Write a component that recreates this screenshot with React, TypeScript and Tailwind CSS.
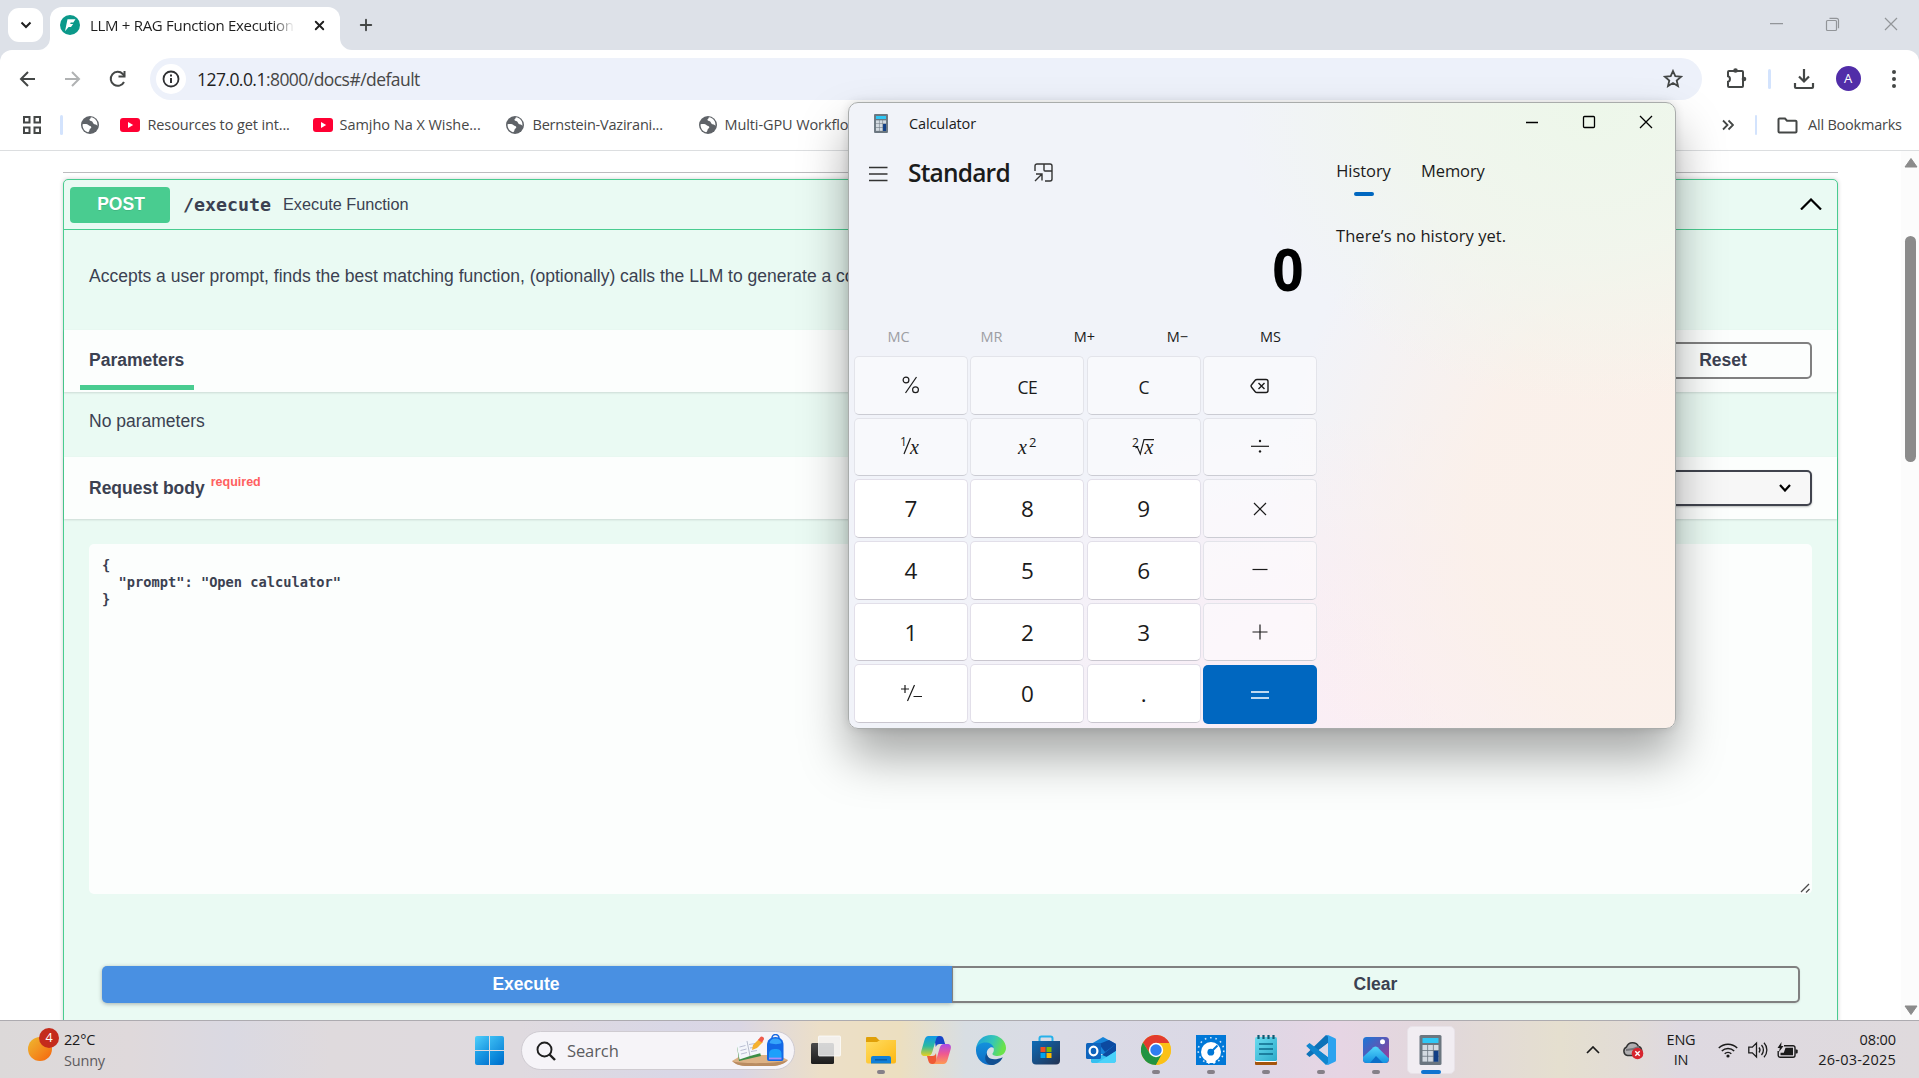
import React from "react";
import { X, Plus } from "lucide-react";

const UI = "font-['Open_Sans','Noto_Sans',sans-serif]";
const ARIAL = "font-['Liberation_Sans',Arial,sans-serif]";

function Globe() {
  return (
    <svg width="20" height="20" viewBox="0 0 20 20" className="shrink-0">
      <circle cx="10" cy="10" r="9" fill="#5f6368" />
      <path d="M2.6 9.2C5 8.6 7.6 8.9 8.7 10.3c.8 1 2.6.6 2.6 2 0 1.300-1.600 1.300-1.800 2.600-.1 1-.8 2.200-1.500 2.300C4.800 16.500 2.200 13 2.600 9.200z" fill="#fff" />
      <path d="M10.800 2.300c.4 1.300-1.600 1.500-1.400 2.600.2 1.200 2.700.6 3.200 2.200.4 1.500 1.500 2.500 2.700 2.500 1 0 1.500.6 2.100 1.300C18 6.500 15.300 2.900 10.800 2.300z" fill="#fff" />
    </svg>
  );
}

function YouTube() {
  return (
    <svg width="20" height="14" viewBox="0 0 20 14" className="shrink-0">
      <rect width="20" height="14" rx="3" fill="#ff0033" />
      <path d="M8 4l5.200 3L8 10z" fill="#fff" />
    </svg>
  );
}

function CalcIcon({ w, h }: { w: number; h: number }) {
  return (
    <svg width={w} height={h} viewBox="0 0 22 30" className="shrink-0">
      <rect width="22" height="30" rx="1.500" fill="#6b7680" />
      <rect x="3" y="3" width="16" height="5" rx=".5" fill="#2fc7f5" />
      {[0, 1, 2].map((r) =>
        [0, 1, 2].map((c) => (
          <rect key={`${r}${c}`} x={3 + c * 5.600} y={10 + r * 5.800} width="4.800" height="5" fill="#d3dae1" />
        ))
      )}
      <rect x="14.200" y="15.800" width="4.800" height="11" fill="#123f86" />
    </svg>
  );
}

function TabStrip() {
  return (
    <div className="flex h-[50px] w-full bg-[#dde1e8]">
      <div className="mt-2 ml-2 flex h-[34px] w-[35px] shrink-0 items-center justify-center rounded-[11px] bg-white">
        <svg width="12" height="8" viewBox="0 0 12 8"><path d="M1.500 1.500L6 6l4.500-4.500" fill="none" stroke="#1f1f1f" strokeWidth="2" /></svg>
      </div>
      <svg width="12" height="12" viewBox="0 0 12 12" className="mt-[38px] -ml-[5px] shrink-0"><path d="M0 12A12 12 0 0 0 12 0V12z" fill="#fff" /></svg>
      <div className="mt-[7px] flex h-[43px] w-[290px] shrink-0 items-center rounded-t-[12px] bg-white pb-[7px] pl-[10px]">
        <svg width="20" height="20" viewBox="0 0 20 20" className="shrink-0">
          <circle cx="10" cy="10" r="10" fill="#0b998a" />
          <path d="M7.500 4.200h8l-2.200 3.200h-2.600L10.200 9h3l-2.200 3h-2.400L5 16.200z" fill="#fff" />
        </svg>
        <div className="ml-[10px] w-[207px] overflow-hidden whitespace-nowrap text-[15px] tracking-[-0.3px] text-[#1f1f1f] [mask-image:linear-gradient(to_right,black_88%,transparent_99%)]">
          LLM + RAG Function Execution API
        </div>
        <X size={15} strokeWidth={3} color="#1f1f1f" className="ml-[15px] shrink-0" />
      </div>
      <svg width="12" height="12" viewBox="0 0 12 12" className="mt-[38px] shrink-0"><path d="M12 12A12 12 0 0 1 0 0V12z" fill="#fff" /></svg>
      <Plus size={18} strokeWidth={2.500} color="#444746" className="mt-4 ml-[5px] shrink-0" />
      <svg width="128" height="16" viewBox="0 0 128 16" className="mt-4 mr-[21px] ml-auto" fill="none" stroke="#929599" strokeWidth="1.200">
        <path d="M0 7.700h13M115 2l12 12M127 2l-12 12" />
        <rect x="56.500" y="4.500" width="10" height="10" rx="1" />
        <path d="M59.500 2.300h7a2 2 0 0 1 2 2v8" />
      </svg>
    </div>
  );
}

function Toolbar() {
  return (
    <div className="bg-[#dde1e8]">
      <div className="flex h-[50px] items-center rounded-t-[12px] bg-white pt-[7px]">
        <svg width="110" height="20" viewBox="0 0 110 20" className="ml-[19px] shrink-0" fill="none" strokeWidth="2">
          <path d="M16 10H2.500M9 3L2 10l7 7" stroke="#444746" />
          <path d="M46 10h13.500M53 3l7 7-7 7" stroke="#b0b2b3" />
          <path d="M105 13A7 7 0 1 1 103.800 5l1.800 2" stroke="#444746" />
          <path d="M105.500 2v5.500h-6" stroke="#444746" />
        </svg>
        <div className="ml-[21px] flex h-[42px] w-[1552px] shrink-0 items-center rounded-full bg-[#edf1fa] pr-[19px] pl-[6px]">
          <div className="flex h-[30px] w-[30px] items-center justify-center rounded-full bg-white">
            <svg width="18" height="18" viewBox="0 0 18 18"><circle cx="9" cy="9" r="7.500" fill="none" stroke="#303133" strokeWidth="1.800" /><path d="M9 8v5M9 4.600v2" stroke="#303133" strokeWidth="2" /></svg>
          </div>
          <div className="mt-[2px] ml-[11px] text-[17.500px] tracking-[-0.55px] text-[#474747]"><span className="text-[#1f1f1f]">127.0.0.1</span>:8000/docs#/default</div>
          <svg width="20" height="20" viewBox="0 0 20 20" className="ml-auto"><path d="M10 2l2.300 5.200 5.700.5-4.300 3.800 1.300 5.600-5-3-5 3 1.300-5.600L2 7.700l5.700-.5z" fill="none" stroke="#444746" strokeWidth="1.800" /></svg>
        </div>
        <svg width="21" height="21" viewBox="0 0 21 21" className="ml-[24px] shrink-0">
          <path d="M2 4a1 1 0 0 1 1-1h13a1 1 0 0 1 1 1v14a1 1 0 0 1-1 1H3a1 1 0 0 1-1-1v-4.200c2.600-.6 2.600-5 0-5.600z" fill="none" stroke="#444746" strokeWidth="2" />
          <circle cx="9.500" cy="2.500" r="2.300" fill="#444746" /><circle cx="18" cy="11" r="2.300" fill="#444746" />
        </svg>
        <div className="ml-[21px] h-5 w-[2.500px] shrink-0 rounded bg-[#d3e3fd]" />
        <svg width="22" height="22" viewBox="0 0 22 22" className="ml-[22px] shrink-0" fill="none" stroke="#444746" strokeWidth="2.200"><path d="M11 1v12M6 8.500l5 5 5-5M2 15v4a1 1 0 0 0 1 1h16a1 1 0 0 0 1-1v-4" /></svg>
        <div className="ml-[21px] flex h-[25px] w-[25px] shrink-0 items-center justify-center rounded-full bg-[#512da8] text-[13px] text-white">A</div>
        <svg width="6" height="20" viewBox="0 0 6 20" className="ml-[30px] shrink-0" fill="#444746"><circle cx="3" cy="3" r="2" /><circle cx="3" cy="10" r="2" /><circle cx="3" cy="17" r="2" /></svg>
      </div>
    </div>
  );
}

function Bookmarks() {
  return (
    <div className="flex h-[51px] items-center border-b border-[#dcdee0] bg-white text-[14.500px] whitespace-nowrap text-[#474747]">
      <svg width="18" height="18" viewBox="0 0 18 18" className="ml-[23px] shrink-0" fill="none" stroke="#444746" strokeWidth="2"><path d="M1 1h5.500v5.500H1zM11.500 1H17v5.500h-5.500zM1 11.500h5.500V17H1zM11.500 11.500H17V17h-5.500z" /></svg>
      <div className="ml-[19px] h-5 w-[2.500px] shrink-0 rounded bg-[#d3e3fd]" />
      <div className="ml-[17px] flex w-[40px] shrink-0"><Globe /></div>
      <div className="flex w-[193px] shrink-0 items-center"><YouTube /><span className="ml-[8px] tracking-[-0.12px]">Resources to get int...</span></div>
      <div className="flex w-[192px] shrink-0 items-center"><YouTube /><span className="ml-[7px] tracking-[-0.03px]">Samjho Na X Wishe...</span></div>
      <div className="flex w-[193px] shrink-0 items-center"><Globe /><span className="ml-[8px] tracking-[-0.22px]">Bernstein-Vazirani...</span></div>
      <div className="flex w-[190px] shrink-0 items-center"><Globe /><span className="ml-[7px] tracking-[-0.1px]">Multi-GPU Workflows</span></div>
      <svg width="12" height="12" viewBox="0 0 12 12" className="ml-auto shrink-0" fill="none" stroke="#444746" strokeWidth="1.800"><path d="M1 1.500L5.500 6 1 10.500M6.500 1.500L11 6l-4.500 4.500" /></svg>
      <div className="ml-[21px] h-5 w-[2.500px] shrink-0 rounded bg-[#d3e3fd]" />
      <svg width="21" height="17" viewBox="0 0 21 17" className="ml-[20px] shrink-0" fill="none" stroke="#444746" strokeWidth="2"><path d="M1.500 2.500a1 1 0 0 1 1-1H8l2 2.200h8.500a1 1 0 0 1 1 1v9.800a1 1 0 0 1-1 1h-16a1 1 0 0 1-1-1z" /></svg>
      <span className="mr-[16px] ml-[10px] w-[95px] tracking-[-0.22px]">All Bookmarks</span>
    </div>
  );
}

function SectionHeader({ children }: { children: React.ReactNode }) {
  return <div className="flex h-[62px] items-center justify-between bg-[#fcfefd] pr-[25px] pb-[2px] pl-[25px] shadow-[0_1px_2px_rgba(0,0,0,0.13)]">{children}</div>;
}

function DocsPage() {
  return (
    <div className={`${ARIAL} flex h-[869px] overflow-hidden bg-white text-[17.500px] text-[#3b4151]`}>
      <div className="ml-[63px] w-[1775px] shrink-0">
        <div className="mt-[21px] h-px bg-[#bcbcbf]" />
        <div className="mt-[6px] h-[900px] rounded-[5px] border border-[#49cc90] bg-[#eafaf3] shadow-[0_0_4px_rgba(0,0,0,0.19)]">
          <div className="flex h-[50px] items-center border-b border-[#49cc90] pr-[15px] pl-[6px]">
            <div className="flex h-[36px] w-[100px] items-center justify-center rounded-[4px] bg-[#49cc90] pl-[2px] text-[17.500px] font-bold text-white [text-shadow:0_1px_0_rgba(0,0,0,0.1)]">POST</div>
            <div className="ml-[13px] w-[100px] font-['DejaVu_Sans_Mono',monospace] text-[18.300px] font-bold">/execute</div>
            <div className="text-[16.250px]">Execute Function</div>
            <svg width="22" height="12" viewBox="0 0 22 12" className="-mt-[2px] ml-auto"><path d="M1 11.500L11 1.500l10 10" fill="none" stroke="#000" strokeWidth="2.200" /></svg>
          </div>
          <div className="flex h-[100px] items-center px-[25px] pb-[8px] whitespace-nowrap">Accepts a user prompt, finds the best matching function, (optionally) calls the LLM to generate a code snippet</div>
          <SectionHeader>
            <div className="-ml-[9px] flex h-[59px] w-[114px] flex-col justify-between pt-[18px]">
              <span className="ml-[9px] leading-[22px] font-bold">Parameters</span>
              <div className="h-[5px] bg-[#49cc90]" />
            </div>
            <div className="flex h-[37px] w-[178px] items-center justify-center rounded-[5px] border-2 border-[#808080] font-bold">Reset</div>
          </SectionHeader>
          <div className="flex h-[65px] items-center px-[25px] pb-[6px]">No parameters</div>
          <SectionHeader>
            <div className="flex pt-[2px] font-bold">Request body<span className="-mt-[2px] ml-[6px] text-[12.500px] font-bold text-[#ff6060]">required</span></div>
            <div className="mt-[1px] flex h-[36px] w-[240px] items-center justify-end rounded-[5px] border-2 border-[#41444e] bg-[#f7f7f7] pr-[19px] shadow-[0_1px_2px_rgba(0,0,0,0.25)]">
              <svg width="12" height="8" viewBox="0 0 12 8"><path d="M1 1l5 5.500L11 1" fill="none" stroke="#000" strokeWidth="2.200" /></svg>
            </div>
          </SectionHeader>
          <div className="mx-[25px] mt-[25px] flex h-[350px] items-end justify-between rounded-[5px] bg-[#fcfefd]">
            <pre className="self-start pt-[13px] pl-[13px] font-['DejaVu_Sans_Mono',monospace] text-[13.700px] leading-[17px] font-bold">{`{
  "prompt": "Open calculator"
}`}</pre>
            <svg width="12" height="12" viewBox="0 0 12 12"><path d="M1 10l8-8M6 10.500L9.500 7" stroke="#4b4b4b" strokeWidth="1.300" /></svg>
          </div>
          <div className="mr-[37px] ml-[38px] mt-[72px] flex h-[37px] font-bold">
            <div className="flex w-[850px] items-center justify-center rounded-l-[5px] bg-[#4990e2] pr-[2px] pb-[1px] text-white shadow-[0_1px_4px_rgba(0,0,0,0.3)]">Execute</div>
            <div className="flex flex-1 items-center justify-center rounded-r-[5px] border-2 border-l-[1px] border-[#808080] pb-[1px] shadow-[0_1px_2px_rgba(0,0,0,0.1)]">Clear</div>
          </div>
        </div>
      </div>
      <div className="ml-auto flex w-[18px] flex-col items-center bg-[#fcfcfc] pt-[7px] pl-[1px]">
        <svg width="14" height="10" viewBox="0 0 14 10"><path d="M7 0.500L13 9H1z" fill="#8b8b8b" stroke="#8b8b8b" strokeLinejoin="round" /></svg>
        <div className="mt-[68px] h-[226px] w-[11px] rounded-full bg-[#8b8b8b]" />
        <svg width="14" height="10" viewBox="0 0 14 10" className="mt-auto mb-[5px]"><path d="M7 9.500L13 1H1z" fill="#8b8b8b" stroke="#8b8b8b" strokeLinejoin="round" /></svg>
      </div>
    </div>
  );
}

const SERIF = "font-['Liberation_Serif',serif] italic";

function Glyph({ name }: { name: string }) {
  const p = { fill: "none", stroke: "#1b1b1b", strokeWidth: 1.200 };
  switch (name) {
    case "%":
      return <svg width="20" height="20" viewBox="0 0 20 20" {...p}><circle cx="5" cy="5" r="2.900" /><circle cx="14.500" cy="14.700" r="2.900" /><path d="M15.500 2L4.500 18" /></svg>;
    case "back":
      return <svg width="20" height="16" viewBox="0 0 20 16" {...p} strokeWidth="1.400" className="mt-[1px]"><path d="M7 1.500h9a2 2 0 0 1 2 2v9a2 2 0 0 1-2 2H7c-.8 0-1.300-.2-1.800-.8L1.600 9.200a1.800 1.800 0 0 1 0-2.400l3.600-4.500c.5-.6 1-.8 1.800-.8zM8.500 5l6 6M14.500 5l-6 6" /></svg>;
    case "inv":
      return <svg width="26" height="26" viewBox="-2 -2 26 26" className="-mt-[2px] overflow-visible"><text x="0" y="11" fontSize="12" className={UI} fill="#1b1b1b">1</text><path d="M10.500 3L4 19" {...p} /><text x="10" y="18.500" fontSize="20" className={SERIF} fill="#1b1b1b">x</text></svg>;
    case "sq":
      return <svg width="22" height="22" viewBox="0 0 22 22" className="-mt-[2px] overflow-visible"><text x="2" y="18.500" fontSize="20" className={SERIF} fill="#1b1b1b">x</text><text x="13" y="11.500" fontSize="13" className={UI} fill="#1b1b1b">2</text></svg>;
    case "root":
      return <svg width="24" height="22" viewBox="0 0 24 22" className="-mt-[2px] overflow-visible"><text x="0" y="11.500" fontSize="12" className={UI} fill="#1b1b1b">2</text><path d="M3.500 13l1.800-1 3 7L12 4.700h10" {...p} /><text x="12.500" y="18.500" fontSize="20" className={SERIF} fill="#1b1b1b">x</text></svg>;
    case "div":
      return <svg width="20" height="20" viewBox="0 0 20 20" {...p} className="-mt-[2px]"><path d="M1 10.300h18" /><circle cx="10" cy="5" r="1.200" fill="#1b1b1b" stroke="none" /><circle cx="10" cy="15.400" r="1.200" fill="#1b1b1b" stroke="none" /></svg>;
    case "mul":
      return <svg width="14" height="14" viewBox="0 0 14 14" {...p}><path d="M1 1l12 12M13 1L1 13" /></svg>;
    case "sub":
      return <svg width="16" height="16" viewBox="0 0 16 16" {...p}><path d="M.5 7.500h15" /></svg>;
    case "add":
      return <svg width="16" height="16" viewBox="0 0 16 16" {...p}><path d="M.5 8h15M8 .5v15" /></svg>;
    case "neg":
      return <svg width="22" height="20" viewBox="0 0 22 20" {...p} className="-mt-[2px]"><path d="M1 6h8M5 2v8M14.500 2L7.500 18M13.500 13.500H22" /></svg>;
    case "eq":
      return <svg width="20" height="12" viewBox="0 0 20 12" stroke="#fff" strokeWidth="1.500"><path d="M1 3h18M1 9h18" /></svg>;
    case "CE":
    case "C":
      return <span className="mt-[3px] text-[17.500px] tracking-[-0.5px]">{name}</span>;
    default:
      return <span className="mt-[1px] text-[22.500px]">{name}</span>;
  }
}

const KEYS = ["%", "CE", "C", "back", "inv", "sq", "root", "div", "7", "8", "9", "mul", "4", "5", "6", "sub", "1", "2", "3", "add", "neg", "0", ".", "eq"];

function keyStyle(k: string) {
  if (k === "eq") return "mt-[1px] -mb-[1px] bg-[#0067c0]";
  if (/^[0-9.]$|neg/.test(k)) return "border border-[#e2dfe9] border-b-[#c9c6cf] bg-white";
  return "border border-[#e3e4ea] border-b-[#cbccd3] bg-white/50";
}

function Calculator() {
  return (
    <div className={`${UI} absolute top-[102px] left-[848px] flex h-[627px] w-[828px] flex-col overflow-hidden rounded-[10px] border border-[#a9acab] bg-[#f1f3f9] bg-[radial-gradient(ellipse_360px_300px_at_90%_0%,#edf7ea_0%,rgba(240,246,236,0.85)_50%,transparent_100%),radial-gradient(ellipse_440px_440px_at_105%_65%,#fbf0e8_0%,rgba(251,240,233,0.9)_55%,transparent_100%),radial-gradient(ellipse_460px_280px_at_63%_95%,#fbeef4_0%,rgba(249,238,246,0.8)_45%,transparent_100%)] text-[#1b1b1b]`}>
      <div className="flex h-[40px] shrink-0 items-center pl-[25px]">
        <CalcIcon w={14} h={19} />
        <span className="mt-[1px] ml-[21px] text-[14.500px] tracking-[-0.12px]">Calculator</span>
        <svg width="128" height="14" viewBox="0 0 128 14" className="-mt-[2px] mr-[22px] ml-auto" fill="none" stroke="#000" strokeWidth="1.300"><path d="M1 7.500h12M115 1l12 12M127 1l-12 12" /><rect x="58.500" y="1.500" width="11" height="11" rx="1" /></svg>
      </div>
      <div className="flex flex-1">
        <div className="flex w-[473px] flex-col">
          <div className="flex h-[60px] items-center pl-[20px]">
            <svg width="19" height="16" viewBox="0 0 19 16" stroke="#333" strokeWidth="1.400" className="mt-[1px]"><path d="M0 1.500h18.500M0 8h18.500M0 14.500h18.500" /></svg>
            <span className="ml-[20px] w-[106px] text-[24.500px] leading-8 font-semibold tracking-[-0.8px]">Standard</span>
            <svg width="19" height="19" viewBox="0 0 19 19" className="mt-[-1px] ml-[20px]" fill="none" stroke="#333" strokeWidth="1.400"><path d="M1 8V3a2 2 0 0 1 2-2h13a2 2 0 0 1 2 2v13a2 2 0 0 1-2 2h-5M10 1v6a1 1 0 0 0 1 1h7M1 18l7-7M2 11h6v6.500" /></svg>
          </div>
          <div className="flex h-[116px] items-center justify-end pt-[15px] pr-[13px] text-[59px] font-bold text-black"><span className="mr-[5px] inline-block origin-right scale-x-[0.93]">0</span></div>
          <div className="ml-[3px] grid h-[36px] w-[465px] grid-cols-5 items-center text-center text-[14.500px]">
            <span className="text-[#9d9ea3]">MC</span><span className="text-[#9d9ea3]">MR</span><span>M+</span><span>M−</span><span>MS</span>
          </div>
          <div className="mt-px ml-[5px] grid h-[367px] w-[463px] grid-cols-[114px_114px_114px_114px] grid-rows-6 justify-between gap-y-[3px]">
            {KEYS.map((k) => (
              <div key={k} className={`flex items-center justify-center rounded-[5px] ${keyStyle(k)}`}><Glyph name={k} /></div>
            ))}
          </div>
        </div>
        <div className="flex flex-col pt-[16px] pl-[14px] text-[16.500px]">
          <div className="flex gap-[30px] leading-[24px]">
            <div className="flex w-[55px] flex-col items-center"><span className="tracking-[-0.05px]">History</span><div className="mt-[9px] h-[4px] w-[20px] rounded-full bg-[#0067c0]" /></div>
            <span className="tracking-[-0.1px]">Memory</span>
          </div>
          <span className="mt-[28px] leading-[24px] tracking-[0.06px]">There’s no history yet.</span>
        </div>
      </div>
    </div>
  );
}

function TaskIcon({ name }: { name: string }) {
  switch (name) {
    case "view":
      return <svg width="32" height="30" viewBox="0 0 32 30"><defs><linearGradient id="tv" x1="0" y1="0" x2="0" y2="1"><stop stopColor="#4a4a4a" /><stop offset="1" stopColor="#1c1c1c" /></linearGradient></defs><rect x="1" y="8" width="23" height="21" rx="1.500" fill="url(#tv)" /><rect x="8.500" y="1" width="22" height="20" rx="1" fill="#f4f4f4" fillOpacity=".82" stroke="#fff" strokeOpacity=".7" /></svg>;
    case "folder":
      return <svg width="32" height="30" viewBox="0 0 32 30"><defs><linearGradient id="fo" x1="0" y1="0" x2="1" y2="1"><stop stopColor="#ffdd62" /><stop offset="1" stopColor="#fdb813" /></linearGradient></defs><path d="M1 3a1 1 0 0 1 1-1h9l3 3h16a1 1 0 0 1 1 1v4H1z" fill="#e0a008" /><path d="M1 7h11l3-2h16v21.500a2 2 0 0 1-2 2H3a2 2 0 0 1-2-2z" fill="url(#fo)" /><path d="M6 28.500V23a2 2 0 0 1 2-2h16a2 2 0 0 1 2 2v5.500z" fill="#1180d8" /><path d="M10 24.800h12" stroke="#0a5ca6" strokeWidth="1.500" /></svg>;
    case "copilot":
      return <svg width="32" height="30" viewBox="0 0 32 30"><defs><linearGradient id="c1" x1="0" y1="0" x2="0" y2="1"><stop stopColor="#1098e8" /><stop offset=".5" stopColor="#2bb9a0" /><stop offset="1" stopColor="#e8d020" /></linearGradient><linearGradient id="c2" x1="0" y1="0" x2="0" y2="1"><stop stopColor="#a94be8" /><stop offset=".5" stopColor="#f0598f" /><stop offset="1" stopColor="#ff9a52" /></linearGradient></defs><path d="M13 1h7c2 0 3 1.200 3.600 3l1.500 5H20c-2.500 0-3.500 1-4.200 3L14 1z" fill="#1646c8" /><path d="M17 29h-5c-2 0-3-1.200-3.600-3L7 21h5c2.500 0 3.500-1 4-3z" fill="#ef5a35" /><path d="M8.500 1H19c-2 .2-2.600 1.800-3.200 4l-3.500 12c-.8 2.700-2 4-4.500 4H4.500C1.500 21 .6 18.700 1.300 16L4.500 5c.8-2.700 2-4 4-4z" fill="url(#c1)" /><path d="M23.500 29H13c2-.2 2.600-1.800 3.200-4l3.500-12c.8-2.700 2-4 4.500-4h3.300c3 0 3.900 2.300 3.200 5l-3.200 11c-.8 2.700-2 4-4 4z" fill="url(#c2)" /></svg>;
    case "edge":
      return <svg width="30" height="30" viewBox="0 0 30 30"><defs><linearGradient id="e1" x1="0" y1="0" x2="1" y2=".3"><stop stopColor="#1b9de2" /><stop offset=".6" stopColor="#35c6b6" /><stop offset="1" stopColor="#6ae24a" /></linearGradient><linearGradient id="e2" x1="0" y1="0" x2="0" y2="1"><stop stopColor="#1391dc" /><stop offset="1" stopColor="#0f6cc4" /></linearGradient></defs><path d="M0 14C1 5 7.500 0 15 0c9 0 15 6.500 15 13 0 5-4 8-8.500 8-3.500 0-5.500-1.200-5-2.500 1-1.500 1.700-2.700 1.200-5C17 10.500 13.500 9 10 9 5 9 1 11.500 0 14z" fill="url(#e1)" /><path d="M0 14c.5-4 5-6.500 9.500-6.500 4 0 7.500 2 8.300 5.500-2.500-2.300-7 .5-7 5 0 5.500 5.500 9 11 8-2 2.500-4.500 4-7 4C6 30-.5 23 0 14z" fill="url(#e2)" /><path d="M10.800 18c0 5.500 6 8.500 16 4.200C24 28 19 30 15.500 30 10.500 29.500 7 24 10.800 18z" fill="#124f91" /></svg>;
    case "store":
      return <svg width="30" height="30" viewBox="0 0 30 30"><defs><linearGradient id="st" x1="0" y1="0" x2="1" y2="1"><stop stopColor="#0c6cb8" /><stop offset="1" stopColor="#243252" /></linearGradient></defs><path d="M8.500 6V3.500a2 2 0 0 1 2-2h9a2 2 0 0 1 2 2V6" fill="none" stroke="#27b1ea" strokeWidth="2" /><path d="M1 6h28v19.500a4 4 0 0 1-4 4H5a4 4 0 0 1-4-4z" fill="url(#st)" /><path d="M9.500 12h5v5h-5z" fill="#f25022" /><path d="M15.500 12h5v5h-5z" fill="#7fba00" /><path d="M9.500 18h5v5h-5z" fill="#00a4ef" /><path d="M15.500 18h5v5h-5z" fill="#ffb900" /></svg>;
    case "outlook":
      return <svg width="32" height="30" viewBox="0 0 32 30"><path d="M6 9l12-7 13 7v10H6z" fill="#1683d8" /><path d="M14 9l10-4 7 4-11 8z" fill="#0c4aa0" /><path d="M6 27V17l11 3L31 11v14a3 3 0 0 1-3 3H7z" fill="#35c0f0" /><path d="M17 20L31 9v7l-9 6z" fill="#0c4aa0" /><path d="M12 28l19-12v9a3 3 0 0 1-3 3z" fill="#4ad2fa" /><rect x="1" y="8" width="15" height="16" rx="1.500" fill="#0f64bd" /><ellipse cx="8.500" cy="16" rx="3.900" ry="4.300" fill="none" stroke="#fff" strokeWidth="2.200" /></svg>;
    case "chrome":
      return <svg width="30" height="30" viewBox="0 0 30 30"><circle cx="15" cy="15" r="15" fill="#fbc116" /><path d="M15 8h13.300A15 15 0 0 0 2 7.500L9 18.700z" fill="#e33b2e" /><path d="M2 7.500A15 15 0 0 0 15 30l6.200-11.300L9 18.700z" fill="#229342" /><path d="M15 30A15 15 0 0 0 28.200 8H15l6.200 10.700z" fill="#fbc116" /><circle cx="15" cy="15" r="7.200" fill="#fff" /><circle cx="15" cy="15" r="5.700" fill="#2f7df0" /></svg>;
    case "gauge":
      return <svg width="30" height="30" viewBox="0 0 30 30"><rect width="30" height="30" fill="#0078d7" /><circle cx="15" cy="15.500" r="12.800" fill="none" stroke="#cfe6fa" strokeWidth="1.600" strokeDasharray="1.600 3.760" /><path d="M10.500 24.500h9v3.500h-9z" fill="#fff" /><circle cx="15" cy="17" r="10" fill="#fff" /><path d="M14.500 17.500L21.500 10.500" stroke="#0078d7" strokeWidth="2" /><circle cx="14.800" cy="17.200" r="3.400" fill="#0078d7" /></svg>;
    case "notepad":
      return <svg width="24" height="30" viewBox="0 0 24 30"><defs><linearGradient id="np" x1="0" y1="0" x2="1" y2="1"><stop stopColor="#6bdcf0" /><stop offset="1" stopColor="#2cabca" /></linearGradient></defs><rect x="1" y="25" width="22" height="5" rx="1" fill="#a4550c" /><rect x="1" y="3" width="22" height="24" rx="1.500" fill="#fff" /><rect x="1" y="2" width="22" height="24" rx="1.500" fill="url(#np)" /><path d="M4.500 0v4M9.500 0v4M14.500 0v4M19.500 0v4" stroke="#115b73" strokeWidth="2.200" /><path d="M5 9h14M5 14h14M5 19h14" stroke="#0e6a8a" strokeWidth="1.700" /></svg>;
    case "code":
      return <svg width="30" height="30" viewBox="0 0 30 30"><path d="M22 8L3.500 22l-2.700-2.200c-.5-.4-.5-1 0-1.400L20 0l4 2v6z" fill="#0d72b8" /><path d="M22 22L3.500 8 .8 10.200c-.5.4-.5 1 0 1.400L20 30l4-3v-6z" fill="#1086cf" /><path d="M22 8.200V21.800L13 15z" fill="#dbd9e8" /><path d="M22 0l7 3.300c.6.300 1 .8 1 1.500v20.400c0 .7-.4 1.200-1 1.500L22 30c-.8 0-1.500-.5-2-1 1.200.6 2-.2 2-1.500v-25C22 1.200 21.200.4 20 1c.5-.5 1.200-1 2-1z" fill="#2da3ef" /></svg>;
    case "photos":
      return <svg width="28" height="28" viewBox="0 0 28 28"><defs><linearGradient id="ph" x1="0" y1="0" x2="1" y2="1"><stop stopColor="#1a78d8" /><stop offset=".6" stopColor="#6950ae" /><stop offset="1" stopColor="#a53c94" /></linearGradient><linearGradient id="p2" x1="0" y1="0" x2="0" y2="1"><stop stopColor="#54d6fb" /><stop offset="1" stopColor="#1391e0" /></linearGradient></defs><rect x="1" y="1" width="26" height="26" rx="3.500" fill="url(#ph)" /><path d="M1 21L11.500 11.300a3 3 0 0 1 4 0L27 22.500c0 2.500-1.500 4.500-3.500 4.500h-19C2.500 27 1 25.500 1 23.500z" fill="url(#p2)" /><path d="M8 27l6-7 7 7z" fill="#0c6fc8" /><circle cx="20.500" cy="5.800" r="2.500" fill="#fff" /></svg>;
    default:
      return <CalcIcon w={23} h={30} />;
  }
}

const APPS: [string, boolean][] = [["view", false], ["folder", true], ["copilot", false], ["edge", false], ["store", false], ["outlook", false], ["chrome", true], ["gauge", true], ["notepad", true], ["code", true], ["photos", true], ["calc", true]];

function Taskbar() {
  return (
    <div className={`${UI} flex h-[58px] items-stretch border-t border-[#adabb0] bg-[linear-gradient(90deg,#dcd9d9_0px,#dfd9db_130px,#dad9e2_230px,#dfdadd_330px,#dfdadf_520px,#d9d7e6_670px,#dad6e4_740px,#ecdfc8_820px,#ecdfc0_900px,#d8dee3_965px,#dadbe6_1060px,#dbd8e5_1220px,#e6d5e4_1340px,#e1d8da_1450px,#e5dfcf_1560px,#e2dcd6_1625px,#ded9e1_1680px,#dfdadd_1919px)] text-[14.500px] text-[#1b1b1b]`}>
      <div className="relative ml-[26px] w-[38px] shrink-0">
        <div className="mt-[16px] ml-[2px] h-[24px] w-[24px] rounded-full bg-linear-to-br from-[#ecb930] to-[#f4610a]" />
        <div className="absolute top-[7px] left-[13px] flex h-5 w-5 items-center justify-center rounded-full bg-[#c42b1c] text-[12.500px] text-white">4</div>
      </div>
      <div className="w-[411px] shrink-0 pt-[9px] leading-[20.500px] tracking-[-0.2px]"><div>22°C</div><div className="text-[#5d5b5e]">Sunny</div></div>
      <div className="mt-[15px] grid h-[29px] w-[29px] shrink-0 grid-cols-2 gap-px self-start">
        <div className="rounded-tl-[2px] bg-linear-to-br from-[#4fd0fb] to-[#1797e2]" /><div className="rounded-tr-[2px] bg-linear-to-br from-[#3cbdf3] to-[#128ddc]" />
        <div className="rounded-bl-[2px] bg-linear-to-br from-[#22a7ea] to-[#0777d2]" /><div className="rounded-br-[2px] bg-linear-to-br from-[#189be4] to-[#006bcb]" />
      </div>
      <div className="mt-[10px] ml-[17px] flex h-[39px] w-[274px] shrink-0 items-center rounded-full border border-[#cfcbd1] bg-[#f6f4f8] pl-[14px]">
        <svg width="20" height="20" viewBox="0 0 20 20" fill="none" stroke="#1f1f1f"><circle cx="8.500" cy="8.500" r="7" strokeWidth="1.900" /><path d="M13.500 13.500l5.500 5.500" strokeWidth="2.400" /></svg>
        <span className="mt-[2px] ml-[11px] text-[16.500px] tracking-[-0.1px] text-[#5c5c60]">Search</span>
        <svg width="60" height="34" viewBox="0 0 60 34" className="mr-[4px] ml-auto">
          <path d="M2 27l10-6h36l10 5c-4 4-10 6-18 6H18C10 32 5 30 2 27z" fill="#dcb286" /><path d="M2 27c6 3 46 3 56-1-4 4-10 6-18 6H18C10 32 5 30 2 27z" fill="#b98c62" />
          <path d="M7 12l20-4 4 14-22 5z" fill="#3d8d45" /><path d="M6.500 10l10.500-3 3 15-10.500 3.500zM17 7l9-2 5 14-11 3z" fill="#f4f6fb" /><path d="M9.500 13l6-1.500M10.500 16.500l6-1.500M11 20l6-1.500M19 10.500l6-1M20 14l6-1M21 17.500l6-1" stroke="#a9afc8" strokeWidth=".8" /><path d="M17 7l3 15" stroke="#b7bccd" />
          <path d="M22 16l1-5 6-6 4 3-6 6z" fill="#f5b12f" /><path d="M28 6l2-2.500a2 2 0 0 1 3.500 2.500L32 8.500z" fill="#ef5b4c" />
          <path d="M42 4a3.500 3.500 0 0 1 7 0" fill="none" stroke="#1a69e0" strokeWidth="1.500" /><path d="M37 11c0-5 3.500-8 8.500-8s8 3 8 8v14a2 2 0 0 1-2 2H39a2 2 0 0 1-2-2z" fill="#1468e6" /><path d="M39.500 9c.5-3 2.500-4.500 6-4.500S51 6 51.500 9c-2 1.500-9 1.500-12 0z" fill="#36a5fb" /><path d="M39 20c0-4 3-5 6.500-5s6 1 6 5v4H39z" fill="#1da0fb" /><path d="M39 24.500h12.500" stroke="#ad8df6" strokeWidth="1.800" />
        </svg>
      </div>
      <div className="ml-[3px] flex shrink-0">
        {APPS.map(([name, open]) => (
          <div key={name} className="relative flex w-[55px] items-start justify-center">
            {name === "calc" && <div className="absolute top-[5px] h-[48px] w-[48px] rounded-[5px] border border-[#e8e2e8] bg-[#f1edf2]" />}
            <div className="relative mt-[14px] flex h-[30px] items-center justify-center"><TaskIcon name={name} /></div>
            {open && <div className={name === "calc" ? "absolute top-[49px] h-[4px] w-[20px] rounded-full bg-[#0f74d0]" : "absolute top-[49px] h-[4px] w-[8px] rounded-full bg-[#858088]"} />}
          </div>
        ))}
      </div>
      <div className="ml-auto flex shrink-0 items-center pt-px">
        <svg width="14" height="8" viewBox="0 0 14 8" fill="none" stroke="#1b1b1b" strokeWidth="1.700"><path d="M1 7l6-6 6 6" /></svg>
        <svg width="22" height="20" viewBox="0 0 22 20" className="ml-[22px]"><path d="M5.500 15.500A4.500 4.500 0 0 1 4.500 7a6.500 6.500 0 0 1 12-.5c2 .5 3 2 3.200 4v5z" fill="#b0aeb0" stroke="#333" strokeWidth="1.500" /><path d="M4 10c3 0 7 0 13-3" stroke="#77757a" strokeWidth="2" fill="none" /><circle cx="15.500" cy="13.500" r="5.800" fill="#d8262f" /><path d="M13.300 11.300l4.400 4.400M17.700 11.300l-4.400 4.400" stroke="#fff" strokeWidth="1.400" /></svg>
        <div className="ml-[21px] w-[32px] text-center leading-[20.500px] tracking-[-0.2px]">ENG<br />IN</div>
        <svg width="20" height="16" viewBox="0 0 20 16" className="ml-[21px]" fill="none" stroke="#1b1b1b" strokeWidth="1.500"><path d="M.8 6a13 13 0 0 1 18.400 0M3.800 9a8.800 8.800 0 0 1 12.400 0M6.700 11.800a4.800 4.800 0 0 1 6.600 0" /><circle cx="10" cy="14" r="1.600" fill="#1b1b1b" stroke="none" /></svg>
        <svg width="20" height="18" viewBox="0 0 20 18" className="ml-[10px]" fill="none" stroke="#1b1b1b" strokeWidth="1.300"><path d="M.8 6.200h3.500L8.500 2v14l-4.200-4.200H.8zM11 6.500a4 4 0 0 1 0 5M13.500 4a7.500 7.500 0 0 1 0 10M16 1.800a10.500 10.500 0 0 1 0 14.400" /></svg>
        <svg width="21" height="17" viewBox="0 0 21 17" className="ml-[9px]"><path d="M7 3.700h9a2 2 0 0 1 2 2v7.600a2 2 0 0 1-2 2H3.200a2 2 0 0 1-2-2V9" fill="none" stroke="#1b1b1b" strokeWidth="1.400" /><path d="M8.500 5.800H16v7.400H3.500v-2.500h3.300z" fill="#1b1b1b" /><path d="M18.500 7.500h1.200a1 1 0 0 1 1 1v2a1 1 0 0 1-1 1h-1.200z" fill="#1b1b1b" /><path d="M4.500 0L.5 6h2.300L2 10l4.500-6H4.200z" fill="#1b1b1b" /></svg>
        <div className="mr-[23px] ml-[16px] w-[82px] text-right leading-[20.500px] whitespace-nowrap"><div className="tracking-[-0.1px]">08:00</div><div className="tracking-[0.2px]">26-03-2025</div></div>
      </div>
    </div>
  );
}

export default function App() {
  return (
    <div className={`${UI} relative flex h-[1078px] w-[1919px] flex-col overflow-hidden bg-white`}>
      <TabStrip />
      <Toolbar />
      <Bookmarks />
      <DocsPage />
      <div className="pointer-events-none absolute inset-x-0 top-0 h-[1020px] overflow-hidden">
        <div className="absolute top-[102px] left-[848px] h-[627px] w-[828px] rounded-[10px] shadow-[0_28px_48px_rgba(0,0,0,0.34),0_0_10px_rgba(0,0,0,0.12)]" />
      </div>
      <Calculator />
      <Taskbar />
    </div>
  );
}
